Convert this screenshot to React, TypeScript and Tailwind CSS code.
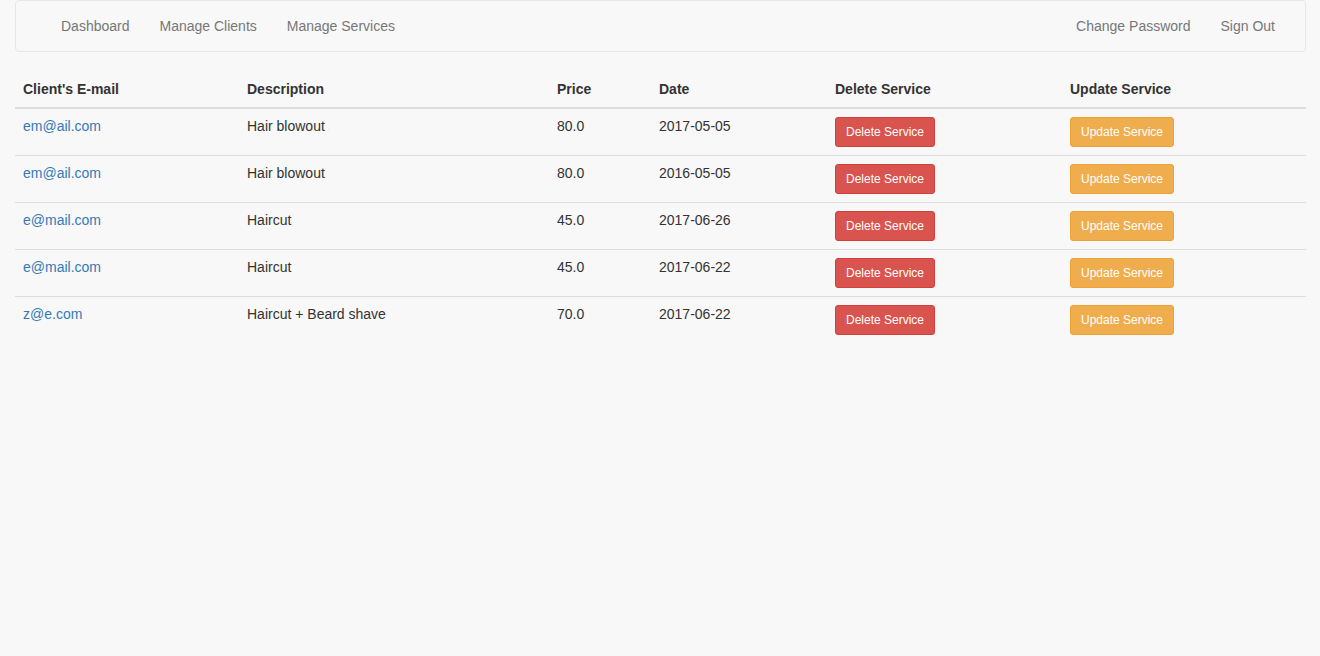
import React from "react";

const rows = [
  { email: "em@ail.com", desc: "Hair blowout", price: "80.0", date: "2017-05-05" },
  { email: "em@ail.com", desc: "Hair blowout", price: "80.0", date: "2016-05-05" },
  { email: "e@mail.com", desc: "Haircut", price: "45.0", date: "2017-06-26" },
  { email: "e@mail.com", desc: "Haircut", price: "45.0", date: "2017-06-22" },
  { email: "z@e.com", desc: "Haircut + Beard shave", price: "70.0", date: "2017-06-22" },
];

const App = () => {
  const textCell = "border-t border-[#ddd] px-[8px] pt-[7px] pb-[9px] align-top";
  const btnCell = "border-t border-[#ddd] p-[8px] align-top";

  return (
    <div className="min-h-screen bg-[#f8f8f8] font-['Liberation_Sans',Arial,sans-serif] text-[14px] leading-[20px] text-[#333]">
      {/* Navbar */}
      <nav className="ml-[15px] mr-[14px] flex min-h-[50px] justify-between rounded border border-[#e7e7e7] bg-[#f8f8f8]">
        <ul className="ml-[30px] flex">
          {["Dashboard", "Manage Clients", "Manage Services"].map((l) => (
            <li key={l}>
              <a href="#" className="block px-[15px] py-[15px] text-[#777] hover:text-[#333]">
                {l}
              </a>
            </li>
          ))}
        </ul>
        <ul className="mr-[15px] flex">
          {["Change Password", "Sign Out"].map((l) => (
            <li key={l}>
              <a href="#" className="block px-[15px] py-[15px] text-[#777] hover:text-[#333]">
                {l}
              </a>
            </li>
          ))}
        </ul>
      </nav>

      {/* Services table */}
      <div className="ml-[15px] mr-[14px] mt-[19px]">
        <table className="w-full table-fixed border-collapse text-left">
          <thead>
            <tr>
              <th className="w-[224px] border-b-2 border-[#ddd] p-[8px] font-bold">Client's E-mail</th>
              <th className="w-[310px] border-b-2 border-[#ddd] p-[8px] font-bold">Description</th>
              <th className="w-[102px] border-b-2 border-[#ddd] p-[8px] font-bold">Price</th>
              <th className="w-[176px] border-b-2 border-[#ddd] p-[8px] font-bold">Date</th>
              <th className="w-[235px] border-b-2 border-[#ddd] p-[8px] font-bold">Delete Service</th>
              <th className="border-b-2 border-[#ddd] p-[8px] font-bold">Update Service</th>
            </tr>
          </thead>
          <tbody>
            {rows.map((r, i) => (
              <tr key={i}>
                <td className={textCell}>
                  <a href="#" className="text-[#337ab7] hover:underline">
                    {r.email}
                  </a>
                </td>
                <td className={textCell}>{r.desc}</td>
                <td className={textCell}>{r.price}</td>
                <td className={textCell}>{r.date}</td>
                <td className={btnCell}>
                  <button className="inline-block rounded-[3px] border border-[#d43f3a] bg-[#d9534f] px-[10px] py-[5px] text-[12px] leading-[18px] text-white">
                    Delete Service
                  </button>
                </td>
                <td className={btnCell}>
                  <button className="inline-block rounded-[3px] border border-[#eea236] bg-[#f0ad4e] px-[10px] py-[5px] text-[12px] leading-[18px] text-white">
                    Update Service
                  </button>
                </td>
              </tr>
            ))}
          </tbody>
        </table>
      </div>
    </div>
  );
};

export default App;
